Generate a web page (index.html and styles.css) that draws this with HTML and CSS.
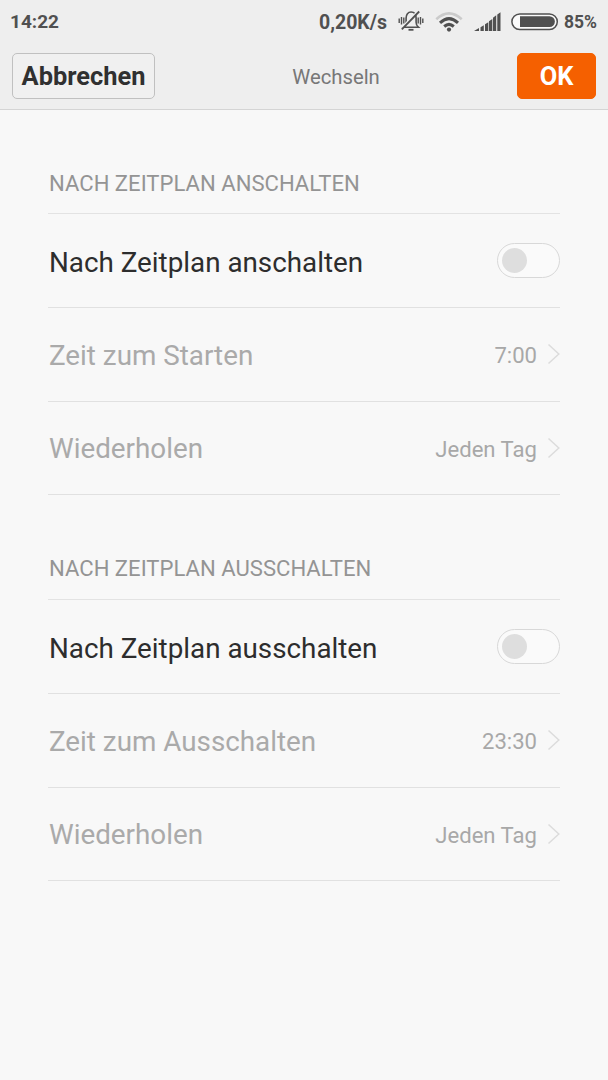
FILE: index.html
```html
<!DOCTYPE html>
<html lang="de">
<head>
<meta charset="utf-8">
<title>Wechseln</title>
<link rel="stylesheet" href="styles.css">
</head>
<body>
<header class="top">
  <div class="status">
    <span class="clock">14:22</span>
    <span class="speed">0,20K/s</span>
    <svg class="bell" width="26" height="22" viewBox="0 0 26 22" fill="none" stroke="#505050">
      <path stroke-width="1.6" d="M5.800 17.200c1.900-1.600 2.300-3 2.300-5V8c0-3.600 1.900-6 5-6s5 2.400 5 6v4.200c0 2 .4 3.400 2.300 5z"/>
      <path stroke-width="1.8" d="M10.500 19.800h5"/>
      <path stroke="#eee" stroke-width="1.700" d="M4 17.400L20 .9"/>
      <path stroke-width="1.800" d="M3.800 19.300L21.200 1.500"/>
      <path stroke-width="1.400" d="M1.200 8.500v4.500M3.500 7v7.500M5.800 7.500v6M20.200 7.500v6M22.500 7v7.500M24.800 8.500v4.500"/>
    </svg>
    <svg class="wifi" width="28" height="22" viewBox="0 0 28 22" fill="none" stroke="#505050">
      <path stroke="#cbcbcb" stroke-width="2.600" d="M1.300 8.300Q14 -3.600 26.700 8.300"/>
      <path stroke-width="3" d="M5 11.800Q14 3.400 23 11.800M9.200 15.500Q14 11.300 18.800 15.500"/>
      <circle cx="14" cy="18.600" r="2.100" fill="#505050" stroke="none"/>
    </svg>
    <svg class="signal" width="27" height="20" viewBox="0 0 27 20" fill="#505050">
      <path d="M0 19l5-3v3zM6.500 15.200l3.300-2V19H6.500zM11 12.300l3.300-2V19H11zM15 9.300l3.300-2.200V19H15zM19 5.800l3.200-2.600V19H19zM23.300 2.600L26.500.3V19h-3.200z"/>
    </svg>
    <svg class="battery" width="48" height="18" viewBox="0 0 48 18">
      <rect x=".9" y=".9" width="45.400" height="15.600" rx="7.800" fill="#fafafa" stroke="#505050" stroke-width="1.500"/>
      <path d="M9 3.200h29.500a5.400 5.400 0 0 1 0 10.800H9z" fill="#505050"/>
    </svg>
    <span class="percent">85%</span>
  </div>
  <div class="bar">
    <button class="btn cancel">Abbrechen</button>
    <h1 class="title">Wechseln</h1>
    <button class="btn ok">OK</button>
  </div>
</header>
<main class="content">
  <section class="group">
    <h2 class="heading">NACH ZEITPLAN ANSCHALTEN</h2>
    <div class="row"><span class="label on">Nach Zeitplan anschalten</span><span class="switch"><span class="knob"></span></span></div>
    <div class="row"><span class="label">Zeit zum Starten</span><span class="value">7:00</span><svg class="chevron" width="13" height="22" viewBox="0 0 13 22"><path d="M1.500 1.500L11.800 11 1.500 20.500"/></svg></div>
    <div class="row"><span class="label">Wiederholen</span><span class="value">Jeden Tag</span><svg class="chevron" width="13" height="22" viewBox="0 0 13 22"><path d="M1.500 1.500L11.800 11 1.500 20.500"/></svg></div>
  </section>
  <section class="group">
    <h2 class="heading">NACH ZEITPLAN AUSSCHALTEN</h2>
    <div class="row"><span class="label on">Nach Zeitplan ausschalten</span><span class="switch"><span class="knob"></span></span></div>
    <div class="row"><span class="label">Zeit zum Ausschalten</span><span class="value">23:30</span><svg class="chevron" width="13" height="22" viewBox="0 0 13 22"><path d="M1.500 1.500L11.800 11 1.500 20.500"/></svg></div>
    <div class="row"><span class="label">Wiederholen</span><span class="value">Jeden Tag</span><svg class="chevron" width="13" height="22" viewBox="0 0 13 22"><path d="M1.500 1.500L11.800 11 1.500 20.500"/></svg></div>
  </section>
</main>
</body>
</html>
```

FILE: styles.css
```css
* { box-sizing: border-box; }
body {
  margin: 0;
  height: 1080px;
  background: #f8f8f8;
  font-family: Roboto, "Liberation Sans", sans-serif;
  overflow: hidden;
}
.top {
  height: 110px;
  background: #eee;
  border-bottom: 1px solid #d4d4d4;
}
.status {
  display: flex;
  align-items: center;
  height: 44px;
  padding: 0 11px 0 10px;
  color: #505050;
  font-size: 19.500px;
  font-weight: 700;
  white-space: nowrap;
}
.clock { margin-right: auto; margin-bottom: 1px; font-size: 19px; }
.bell { margin-left: 11px; margin-bottom: 2px; }
.wifi { margin-left: 11px; margin-bottom: 1px; }
.signal { margin-left: 11px; margin-bottom: 1px; }
.battery { margin-left: 10px; margin-bottom: 1px; }
.percent { margin-left: 5px; font-size: 17.500px; }
.bar {
  display: grid;
  grid-template-columns: 143px 1fr 79px;
  align-items: center;
  padding: 9px 12px 0;
}
.btn {
  height: 46px;
  padding: 0;
  border-radius: 5px;
  font-family: inherit;
  font-size: 25.400px;
  font-weight: 700;
}
.cancel { background: #f0f0f0; border: 1px solid #c0c0c0; color: #303030; }
.ok { background: #f56000; border: 1px solid #f56000; color: #fff; }
.title {
  margin: 0;
  padding-top: 1px;
  text-align: center;
  font-size: 20.300px;
  font-weight: 400;
  color: #777;
}
.content { padding: 0 48px; }
.heading {
  display: flex;
  align-items: flex-end;
  height: 104px;
  margin: 0;
  padding: 0 1px 17px;
  border-bottom: 1px solid #e3e3e3;
  color: #949494;
  font-size: 22.100px;
  font-weight: 400;
  line-height: 26px;
}
.group + .group .heading { height: 104.600px; padding-bottom: 18px; }
.row {
  display: flex;
  align-items: center;
  height: 93.800px;
  padding-left: 1px;
  padding-top: 2px;
  border-bottom: 1px solid #e1e1e1;
}
.row:nth-of-type(1) { padding-top: 4px; }
.row:nth-of-type(1) .switch { margin-bottom: 3px; }
.label { margin-right: auto; color: #aaa; font-size: 27.800px; }
.label.on { color: #2d2d2d; }
.value { color: #a8a8a8; font-size: 22.100px; }
.chevron { margin-left: 10px; margin-bottom: 2px; fill: none; stroke: #dcdcdc; stroke-width: 1.500; }
.switch {
  display: flex;
  align-items: center;
  width: 63px;
  height: 35px;
  padding-left: 4px;
  border: 1px solid #d8d8d8;
  border-radius: 18px;
  background: #fafafa;
}
.knob { width: 25px; height: 25px; border-radius: 50%; background: #dedede; }
```
